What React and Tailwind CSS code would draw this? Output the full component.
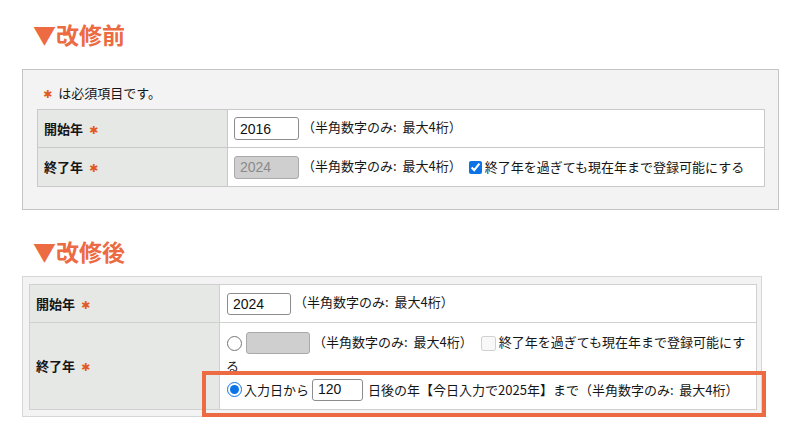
const jp = { fontFamily: '"Noto Sans CJK JP", "Liberation Sans", sans-serif' };
const star = { fontFamily: '"DejaVu Sans", sans-serif' };

function Required() {
    return (
        <span className="ml-[6px] text-[11px] leading-none font-normal text-[#e25a1f]" style={star}>
            ✱
        </span>
    );
}

function Note() {
    return <span className="ml-[3px]">（半角数字のみ:&nbsp;&nbsp;最大4桁）</span>;
}

function YearInput({ value, disabled, className = '' }) {
    return (
        <input
            type="text"
            defaultValue={value}
            disabled={disabled}
            style={{ fontFamily: '"Liberation Sans", Arial, sans-serif' }}
            className={
                'inline-block align-middle rounded-[3px] border px-[5px] text-[14px] outline-none ' +
                (disabled
                    ? 'bg-[#cfcfcf] border-[#a9a9a9] text-[#8a8a8a] '
                    : 'bg-white border-[#8d8d8d] text-[#111] ') +
                className
            }
        />
    );
}

export default function App() {
    return (
        <div className="min-h-screen bg-white text-[13px] text-[#161616]" style={jp}>
            {/* before */}
            <h2 className="pl-[33px] pt-[19px] text-[23px] leading-[30px] font-bold text-[#ec6b42]">
                ▼改修前
            </h2>
            <div className="mt-[20px] ml-[22px] w-[757px] border border-[#c4c4c4] bg-[#f3f3f3] px-[14px] pt-[13px] pb-[22px]">
                <p className="h-[20px] pl-[6px] leading-[20px] mb-[6px]">
                    <span className="mr-[6px] text-[11px] leading-none text-[#e25a1f]" style={star}>✱</span>は必須項目です。
                </p>
                <table className="w-[728px] border-collapse bg-white">
                    <tbody>
                        <tr className="h-[38px]">
                            <th className="w-[190px] border border-[#c9c9c9] bg-[#e6e8e6] pl-[6px] text-left font-bold">
                                開始年<Required />
                            </th>
                            <td className="border border-[#c9c9c9] pl-[6px]">
                                <YearInput value="2016" className="w-[65px] h-[23px]" />
                                <Note />
                            </td>
                        </tr>
                        <tr className="h-[39px]">
                            <th className="border border-[#c9c9c9] bg-[#e6e8e6] pl-[6px] text-left font-bold">
                                終了年<Required />
                            </th>
                            <td className="border border-[#c9c9c9] pl-[6px]">
                                <YearInput value="2024" disabled className="w-[65px] h-[23px]" />
                                <Note />
                                <label className="ml-[7px] inline-flex items-center align-middle">
                                    <input type="checkbox" defaultChecked className="m-0 mr-[3px] h-[13px] w-[13px] accent-[#0b73e6]" />
                                    終了年を過ぎても現在年まで登録可能にする
                                </label>
                            </td>
                        </tr>
                    </tbody>
                </table>
            </div>

            {/* after */}
            <h2 className="mt-[26px] pl-[33px] text-[23px] leading-[30px] font-bold text-[#ec6b42]">
                ▼改修後
            </h2>
            <div className="relative mt-[10px] ml-[22px] w-[740px] border border-[#d6d6d6] bg-[#f3f3f3] pt-[7px] pr-[4px] pb-[6px] pl-[6px]">
                <table className="w-[728px] border-collapse bg-white">
                    <tbody>
                        <tr className="h-[38px]">
                            <th className="w-[190px] border border-[#d0d0d0] bg-[#e6e8e6] pl-[6px] text-left font-bold">
                                開始年<Required />
                            </th>
                            <td className="border border-[#d0d0d0] pl-[7px]">
                                <YearInput value="2024" className="w-[64px] h-[22px]" />
                                <Note />
                            </td>
                        </tr>
                        <tr className="h-[86px]">
                            <th className="border border-[#d0d0d0] bg-[#e6e8e6] pl-[6px] text-left font-bold">
                                終了年<Required />
                            </th>
                            <td className="border border-[#d0d0d0] pt-[7px] pr-[8px] pb-[8px] pl-[6px] leading-[23px]">
                                <div>
                                    <input type="radio" name="end" className="m-0 mr-[4px] ml-[1px] h-[15px] w-[15px] align-middle" />
                                    <YearInput disabled className="w-[64px] h-[22px]" />
                                    <Note />
                                    <input type="checkbox" disabled className="m-0 ml-[8px] mr-[3px] h-[15px] w-[15px] align-middle" />
                                    終了年を過ぎても現在年まで登録可能にする
                                </div>
                                <div className="mt-[1px] flex items-center">
                                    <input type="radio" name="end" defaultChecked className="m-0 mr-[2px] ml-[1px] h-[15px] w-[15px] accent-[#0b73e6]" />
                                    入力日から
                                    <YearInput value="120" className="ml-[3px] mr-[5px] w-[51px] h-[22px]" />
                                    日後の年【今日入力で2025年】まで（半角数字のみ:&nbsp;&nbsp;最大4桁）
                                </div>
                            </td>
                        </tr>
                    </tbody>
                </table>
                {/* highlight around the new option */}
                <div className="pointer-events-none absolute left-[179px] top-[94px] h-[46px] w-[564px] border-[4px] border-[#ec6b42]" />
            </div>
        </div>
    );
}
